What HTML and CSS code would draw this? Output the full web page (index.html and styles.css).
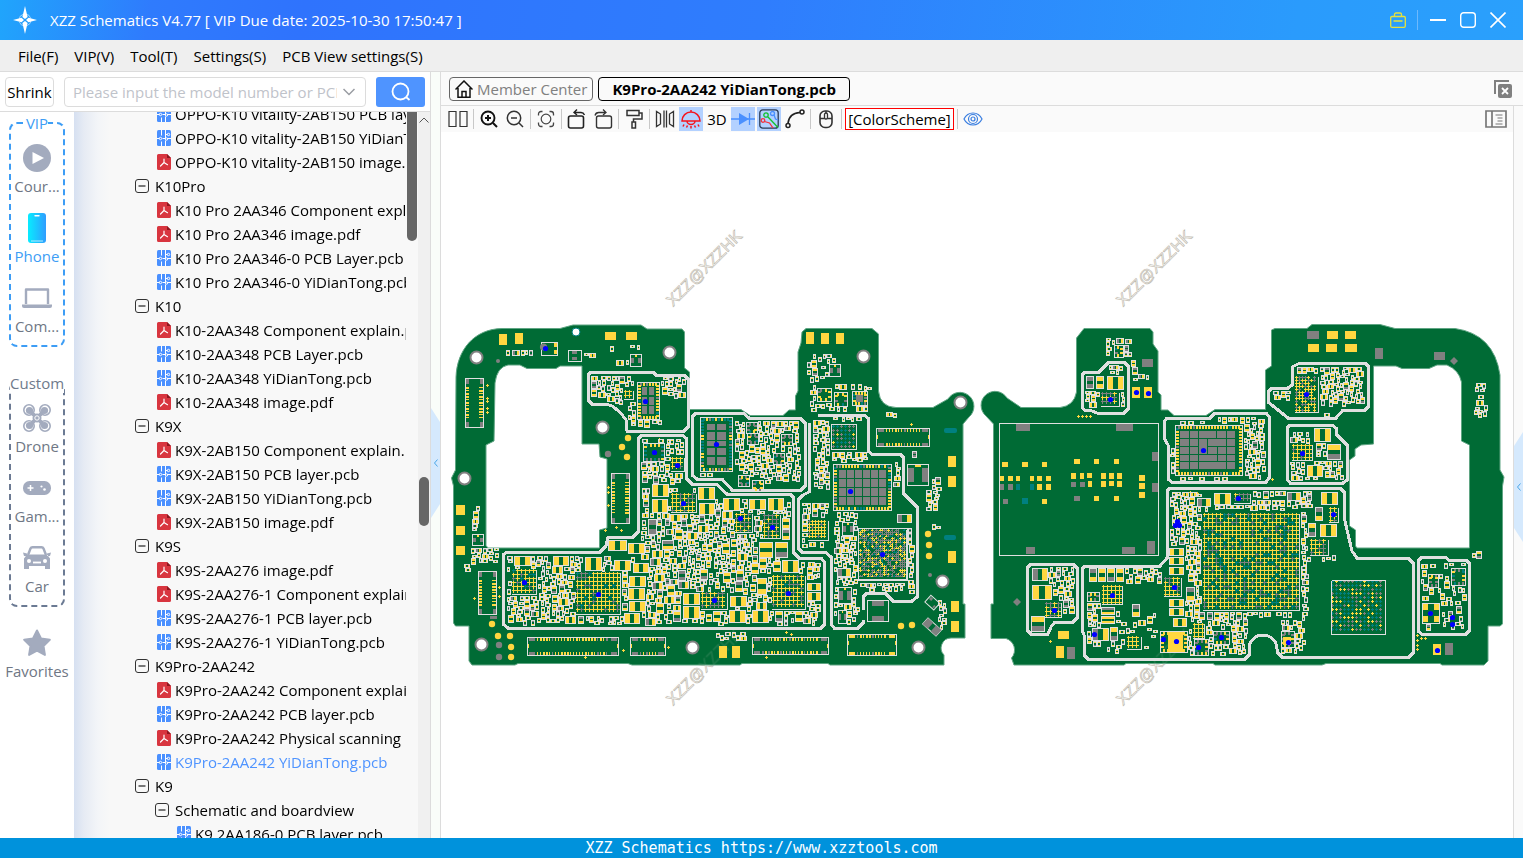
FILE: index.html
```html
<!DOCTYPE html>
<html lang="en">
<head>
    <meta charset="UTF-8">
    <meta name="viewport" content="width=device-width, initial-scale=1.0">
    <title>XZZ Schematics</title>
    <link rel="stylesheet" href="styles.css">
</head>
<body>
    <svg class="sprite" aria-hidden="true">
        <symbol id="i-pdf" viewBox="0 0 14 16">
            <path d="M1.5 0H10l4 4v10.500a1.500 1.500 0 0 1-1.500 1.500h-11A1.500 1.500 0 0 1 0 14.500v-13A1.500 1.500 0 0 1 1.500 0z" fill="#d8353f"/>
            <path d="M10 0l4 4h-4z" fill="#8d1720"/>
            <path d="M7 5v3.500M7 8.500L3.500 12M7 8.500l3.500 2.200" fill="none" stroke="#fff" stroke-width="1.200" stroke-linecap="round"/>
        </symbol>
        <symbol id="i-pcb" viewBox="0 0 14 16">
            <rect width="14" height="16" rx="1.500" fill="#4a90ff"/>
            <path d="M4.500 0v5.500M8.500 0v8M0 8.500h2.500M8.500 4.500h2M4.500 16v-4.500M8.500 16v-5.500M10.500 8.500H14M5.500 8.500h3" fill="none" stroke="#fff" stroke-width="1"/>
            <circle cx="3.500" cy="8.500" r="1.200" fill="none" stroke="#fff"/>
            <circle cx="11.500" cy="4.500" r="1.200" fill="none" stroke="#fff"/>
            <circle cx="9.500" cy="9" r="1.200" fill="none" stroke="#fff"/>
        </symbol>
        <symbol id="i-minus" viewBox="0 0 14 14">
            <rect x="0.500" y="0.500" width="13" height="13" rx="2.500" fill="none" stroke="#333"/>
            <path d="M3.500 7h7" stroke="#222" stroke-width="1.200"/>
        </symbol>
    </svg>

    <header class="titlebar">
        <svg class="logo" viewBox="0 0 24 28" aria-hidden="true">
            <circle cx="12" cy="14" r="6" fill="none" stroke="#9fd4ff" stroke-width="1" stroke-dasharray="7 2.400"/>
            <path d="M12 0l2.600 11L12 13l-2.600-2zM12 28l-2.600-11L12 15l2.600 2zM0 14l8.500-2.200L11 14l-2.500 2.200zM24 14l-8.500-2.200L13 14l2.500 2.200z" fill="#fff"/>
        </svg>
        <h1>XZZ Schematics V4.77 [ VIP Due date: 2025-10-30 17:50:47 ]</h1>
        <div class="window-buttons">
            <button class="win-btn bag" aria-label="Store">
                <svg viewBox="0 0 16 16" width="16" height="16"><path d="M2 4.500h12a1.300 1.300 0 0 1 1.300 1.300v8.200a1.300 1.300 0 0 1-1.300 1.300H2A1.300 1.300 0 0 1 0.700 14V5.800A1.300 1.300 0 0 1 2 4.500zM4.500 4V2.500A1.500 1.500 0 0 1 6 1h4a1.500 1.500 0 0 1 1.500 1.500V4M3.500 9h9" fill="none" stroke="#e6e23c" stroke-width="1.300"/></svg>
            </button>
            <button class="win-btn" aria-label="Minimize">
                <svg viewBox="0 0 16 16" width="16" height="16"><path d="M0 8h16" stroke="#fff" stroke-width="2"/></svg>
            </button>
            <button class="win-btn" aria-label="Maximize">
                <svg viewBox="0 0 16 16" width="16" height="16"><rect x="0.700" y="0.700" width="14.600" height="14.600" rx="3" fill="none" stroke="#fff" stroke-width="1.400"/></svg>
            </button>
            <button class="win-btn" aria-label="Close">
                <svg viewBox="0 0 16 16" width="16" height="16"><path d="M0.500 0.500l15 15M15.500 0.500l-15 15" stroke="#fff" stroke-width="1.600"/></svg>
            </button>
        </div>
    </header>

    <nav class="menubar">
        <a href="#">File(F)</a>
        <a href="#">VIP(V)</a>
        <a href="#">Tool(T)</a>
        <a href="#">Settings(S)</a>
        <a href="#">PCB View settings(S)</a>
    </nav>

    <main class="workspace">
        <section class="side">
            <form class="search">
                <button type="button" class="shrink">Shrink</button>
                <div class="search-box">
                    <input type="text" aria-label="Model number" placeholder="Please input the model number or PCB">
                    <svg viewBox="0 0 12 8" width="12" height="8" aria-hidden="true"><path d="M0.500 1L6 6.500 11.500 1" fill="none" stroke="#9a9da3" stroke-width="1.500"/></svg>
                </div>
                <button type="button" class="search-btn" aria-label="Search">
                    <svg viewBox="0 0 20 20" width="20" height="20"><circle cx="9.500" cy="9.500" r="8" fill="none" stroke="#fff" stroke-width="1.800"/><path d="M15 15l3.500 3" stroke="#fff" stroke-width="1.800"/></svg>
                </button>
            </form>

            <div class="side-body">
                <div class="categories">
                    <fieldset class="vip">
                        <legend>VIP</legend>
                        <button class="cat">
                            <svg viewBox="0 0 28 28" width="28" height="28"><circle cx="14" cy="14" r="14" fill="#a3abbe"/><path d="M9.500 8v12l11.500-6z" fill="#fff"/></svg>
                            <span>Cour...</span>
                        </button>
                        <button class="cat active">
                            <svg viewBox="0 0 28 30" width="28" height="30"><defs><linearGradient id="phone" x1="0" x2="1"><stop offset="0" stop-color="#08ecff"/><stop offset="1" stop-color="#2f9dff"/></linearGradient></defs><rect x="5" width="18" height="30" rx="3" fill="url(#phone)"/><path d="M12 2.800h4" stroke="#fff" stroke-width="1.400" stroke-linecap="round"/><path d="M8 28h12" stroke="#b8ecff"/></svg>
                            <span>Phone</span>
                        </button>
                        <button class="cat">
                            <svg viewBox="0 0 30 20" width="30" height="20"><path d="M4 16V1.500h22V16" fill="none" stroke="#a3abbe" stroke-width="2.400" stroke-linejoin="round"/><path d="M0 16.500h30v1.500a2 2 0 0 1-2 2H2a2 2 0 0 1-2-2z" fill="#a3abbe"/></svg>
                            <span>Com...</span>
                        </button>
                    </fieldset>
                    <fieldset class="custom">
                        <legend>Custom</legend>
                        <button class="cat">
                            <svg viewBox="0 0 28 28" width="28" height="28"><path d="M6 6l16 16M22 6L6 22" stroke="#a3abbe" stroke-width="3.600"/><g fill="#fff" stroke="#a3abbe" stroke-width="1.600"><circle cx="6" cy="6" r="5.200"/><circle cx="22" cy="6" r="5.200"/><circle cx="6" cy="22" r="5.200"/><circle cx="22" cy="22" r="5.200"/></g><g fill="#a3abbe"><circle cx="6.500" cy="6.500" r="3.600"/><circle cx="21.500" cy="6.500" r="3.600"/><circle cx="6.500" cy="21.500" r="3.600"/><circle cx="21.500" cy="21.500" r="3.600"/><circle cx="14" cy="14" r="4.500"/></g><path d="M7 7l5 5M21 7l-5 5M7 21l5-5M21 21l-5-5" stroke="#a3abbe" stroke-width="3"/><circle cx="14" cy="14" r="2.200" fill="none" stroke="#fff"/></svg>
                            <span>Drone</span>
                        </button>
                        <button class="cat">
                            <svg viewBox="0 0 28 14" width="28" height="14"><rect width="28" height="14" rx="6.500" fill="#a3abbe"/><path d="M4.500 7h6M7.500 4v6" stroke="#fff" stroke-width="1.500"/><circle cx="18.500" cy="5.500" r="1.100" fill="#fff"/><circle cx="21.500" cy="8.500" r="1.300" fill="#fff"/></svg>
                            <span>Gam...</span>
                        </button>
                        <button class="cat">
                            <svg viewBox="0 0 28 24" width="28" height="24"><path d="M5 9l2.500-6.500Q8 1.200 9.500 1.200h9q1.500 0 2 1.300L23 9" fill="none" stroke="#a3abbe" stroke-width="2.400"/><path d="M0 6.500l4 1v2.500H1zM28 6.500l-4 1v2.500h3zM4 8.500h20l3 4V23h-5v-3H6v3H1V12.500z" fill="#a3abbe"/><circle cx="6" cy="15" r="2" fill="#fff"/><circle cx="22" cy="15" r="2" fill="#fff"/><path d="M10 16.500h8" stroke="#fff" stroke-width="1.800"/></svg>
                            <span>Car</span>
                        </button>
                    </fieldset>
                    <button class="cat favorites">
                        <svg viewBox="0 0 28 28" width="28" height="28"><path d="M14 1.500l4 8 8.800 1.300-6.300 6.200 1.400 8.900-7.900-4.200-7.900 4.200L7.500 17 1.200 10.800 10 9.500z" fill="#a3abbe" stroke="#a3abbe" stroke-width="2" stroke-linejoin="round"/></svg>
                        <span>Favorites</span>
                    </button>
                </div>

                <div class="tree-wrap">
                    <ul class="tree">
                        <li><a href="#" class="file"><svg><use href="#i-pcb"/></svg>OPPO-K10 vitality-2AB150 PCB layer.pcb</a></li>
                        <li><a href="#" class="file"><svg><use href="#i-pcb"/></svg>OPPO-K10 vitality-2AB150 YiDianTong.pcb</a></li>
                        <li><a href="#" class="file"><svg><use href="#i-pdf"/></svg>OPPO-K10 vitality-2AB150 image.pdf</a></li>
                        <li><a href="#" class="group"><svg><use href="#i-minus"/></svg>K10Pro</a></li>
                        <li><a href="#" class="file"><svg><use href="#i-pdf"/></svg>K10 Pro 2AA346 Component explain.pdf</a></li>
                        <li><a href="#" class="file"><svg><use href="#i-pdf"/></svg>K10 Pro 2AA346 image.pdf</a></li>
                        <li><a href="#" class="file"><svg><use href="#i-pcb"/></svg>K10 Pro 2AA346-0 PCB Layer.pcb</a></li>
                        <li><a href="#" class="file"><svg><use href="#i-pcb"/></svg>K10 Pro 2AA346-0 YiDianTong.pcb</a></li>
                        <li><a href="#" class="group"><svg><use href="#i-minus"/></svg>K10</a></li>
                        <li><a href="#" class="file"><svg><use href="#i-pdf"/></svg>K10-2AA348 Component explain.pdf</a></li>
                        <li><a href="#" class="file"><svg><use href="#i-pcb"/></svg>K10-2AA348 PCB Layer.pcb</a></li>
                        <li><a href="#" class="file"><svg><use href="#i-pcb"/></svg>K10-2AA348 YiDianTong.pcb</a></li>
                        <li><a href="#" class="file"><svg><use href="#i-pdf"/></svg>K10-2AA348 image.pdf</a></li>
                        <li><a href="#" class="group"><svg><use href="#i-minus"/></svg>K9X</a></li>
                        <li><a href="#" class="file"><svg><use href="#i-pdf"/></svg>K9X-2AB150 Component explain.pdf</a></li>
                        <li><a href="#" class="file"><svg><use href="#i-pcb"/></svg>K9X-2AB150 PCB layer.pcb</a></li>
                        <li><a href="#" class="file"><svg><use href="#i-pcb"/></svg>K9X-2AB150 YiDianTong.pcb</a></li>
                        <li><a href="#" class="file"><svg><use href="#i-pdf"/></svg>K9X-2AB150 image.pdf</a></li>
                        <li><a href="#" class="group"><svg><use href="#i-minus"/></svg>K9S</a></li>
                        <li><a href="#" class="file"><svg><use href="#i-pdf"/></svg>K9S-2AA276 image.pdf</a></li>
                        <li><a href="#" class="file"><svg><use href="#i-pdf"/></svg>K9S-2AA276-1 Component explain.pdf</a></li>
                        <li><a href="#" class="file"><svg><use href="#i-pcb"/></svg>K9S-2AA276-1 PCB layer.pcb</a></li>
                        <li><a href="#" class="file"><svg><use href="#i-pcb"/></svg>K9S-2AA276-1 YiDianTong.pcb</a></li>
                        <li><a href="#" class="group"><svg><use href="#i-minus"/></svg>K9Pro-2AA242</a></li>
                        <li><a href="#" class="file"><svg><use href="#i-pdf"/></svg>K9Pro-2AA242 Component explain.pdf</a></li>
                        <li><a href="#" class="file"><svg><use href="#i-pcb"/></svg>K9Pro-2AA242 PCB layer.pcb</a></li>
                        <li><a href="#" class="file"><svg><use href="#i-pdf"/></svg>K9Pro-2AA242 Physical scanning image.pdf</a></li>
                        <li><a href="#" class="file current"><svg><use href="#i-pcb"/></svg>K9Pro-2AA242 YiDianTong.pcb</a></li>
                        <li><a href="#" class="group"><svg><use href="#i-minus"/></svg>K9</a></li>
                        <li><a href="#" class="group nested"><svg><use href="#i-minus"/></svg>Schematic and boardview</a></li>
                        <li><a href="#" class="file nested"><svg><use href="#i-pcb"/></svg>K9 2AA186-0 PCB layer.pcb</a></li>
                    </ul>
                    <div class="scroll-inner"><div class="thumb"></div></div>
                    <div class="scroll-outer">
                        <svg viewBox="0 0 10 6" width="10" height="6" aria-hidden="true"><path d="M0.500 5.500L5 1l4.500 4.500" fill="none" stroke="#555"/></svg>
                        <div class="thumb"></div>
                    </div>
                </div>
            </div>
        </section>

        <div class="splitter">
            <button class="handle left" aria-label="Collapse panel"><svg viewBox="0 0 4 8" width="4" height="8"><path d="M3.500 0.500L0.500 4l3 3.500" fill="none" stroke="#4aa6e8"/></svg></button>
        </div>

        <section class="viewer">
            <div class="tabs">
                <button class="tab">
                    <svg viewBox="0 0 18 18" width="18" height="18"><path d="M0.500 9.500L9 1l8.500 8.500M3 8v9.200h12V8M7 17v-5.500h4V17" fill="none" stroke="#111" stroke-width="1.500"/></svg>
                    Member Center
                </button>
                <button class="tab current">K9Pro-2AA242 YiDianTong.pcb</button>
                <button class="close-all" aria-label="Close all tabs">
                    <svg viewBox="0 0 18 18" width="18" height="18"><path d="M1 14V1h14" fill="none" stroke="#808080" stroke-width="2"/><rect x="4" y="4" width="14" height="14" rx="2" fill="#808080"/><path d="M8 8l6 6M14 8l-6 6" stroke="#fff" stroke-width="1.800"/></svg>
                </button>
            </div>

            <div class="view-row">
                <div class="view-col">
                    <div class="toolbar">
                        <button class="tool" aria-label="Split view"><svg viewBox="0 0 20 20"><path d="M1 2.500h7v15H1zM12 2.500h7v15h-7z" fill="none" stroke="#333" stroke-width="1.200"/></svg></button>
                        <i class="sep"></i>
                        <button class="tool" aria-label="Zoom in"><svg viewBox="0 0 20 20"><circle cx="9" cy="9" r="6.500" fill="none" stroke="#111" stroke-width="1.900"/><path d="M14 14l4 4M6 9h6M9 6v6" stroke="#111" stroke-width="2"/></svg></button>
                        <button class="tool" aria-label="Zoom out"><svg viewBox="0 0 20 20"><circle cx="9" cy="9" r="6.700" fill="none" stroke="#333" stroke-width="1.500"/><path d="M14 14l4 4M6 9h6" stroke="#333" stroke-width="1.500"/></svg></button>
                        <i class="sep"></i>
                        <button class="tool" aria-label="Fit"><svg viewBox="0 0 20 20"><circle cx="10" cy="10" r="4.800" fill="none" stroke="#444" stroke-width="1.200"/><path d="M2.500 6.500V5A2.500 2.500 0 0 1 5 2.500h1.500M13.500 2.500H15A2.500 2.500 0 0 1 17.500 5v1.500M17.500 13.500V15a2.500 2.500 0 0 1-2.500 2.500h-1.500M6.500 17.500H5A2.500 2.500 0 0 1 2.500 15v-1.500" fill="none" stroke="#444" stroke-width="1.300"/></svg></button>
                        <i class="sep"></i>
                        <button class="tool" aria-label="Rotate left"><svg viewBox="0 0 20 20"><rect x="1.500" y="7" width="15" height="12" rx="2" fill="none" stroke="#222" stroke-width="1.600"/><path d="M7 3.500h7a4 4 0 0 1 3.500 2.500M10 0.500l-3 3 3 2.500" fill="none" stroke="#222" stroke-width="1.400"/></svg></button>
                        <button class="tool" aria-label="Rotate right"><svg viewBox="0 0 20 20"><rect x="3.500" y="7" width="15" height="12" rx="2" fill="none" stroke="#333" stroke-width="1.400"/><path d="M13 3.500H6A4 4 0 0 0 2 6.500M10 0.500l3 3-3 2.500" fill="none" stroke="#333" stroke-width="1.300"/></svg></button>
                        <i class="sep"></i>
                        <button class="tool" aria-label="Paint"><svg viewBox="0 0 20 20"><path d="M3 1.500h12v5H3zM15 4h3v6H9.500v3M8 13h3.500v6H8z" fill="none" stroke="#333" stroke-width="1.500"/></svg></button>
                        <i class="sep"></i>
                        <button class="tool" aria-label="Mirror"><svg viewBox="0 0 20 20"><path d="M1.500 2.500v15l4-2.500V5zM18.500 2.500v15l-4-2.500V5zM9 1.500v17M11.500 1.500v17" fill="none" stroke="#333" stroke-width="1.300"/></svg></button>
                        <button class="tool on" aria-label="Light"><svg viewBox="0 0 20 20"><path d="M10 1v2M1 12c0-5 4-9 9-9s9 4 9 9zM6 12c0 2 2 3.500 4 3.500s4-1.500 4-3.500M3 15.500l-1 2M6.500 16.500l-1 2M10 17v2.500M13.500 16.500l1 2M17 15.500l1 2" fill="none" stroke="#f5141e" stroke-width="1.500"/></svg></button>
                        <button class="tool text">3D</button>
                        <button class="tool on" aria-label="Diode"><svg viewBox="0 0 24 20" class="wide"><path d="M0 10h24M18.500 4v12" stroke="#4a90ff" stroke-width="1.300"/><path d="M8 4v12l10-6z" fill="#4a90ff"/></svg></button>
                        <button class="tool on" aria-label="Nets"><svg viewBox="0 0 20 20"><rect x="0.800" y="0.800" width="18.400" height="18.400" rx="3" fill="none" stroke="#2a3a55" stroke-width="1.300"/><path d="M15 6l1.500 4 2.500 1" stroke="#4a90ff" stroke-width="1.300" fill="none"/><circle cx="13.500" cy="4.500" r="2" fill="none" stroke="#4a90ff" stroke-width="1.300"/><circle cx="7" cy="6" r="2.200" fill="none" stroke="#13c22c" stroke-width="1.300"/><path d="M9 8l10 10.500" stroke="#13c22c" stroke-width="1.300"/><circle cx="4" cy="11.500" r="1.800" fill="none" stroke="#f5323c" stroke-width="1.300"/><path d="M5.500 12.500l5 1.500 3.500 5" fill="none" stroke="#f5323c" stroke-width="1.300"/></svg></button>
                        <button class="tool" aria-label="Jumper"><svg viewBox="0 0 20 20"><circle cx="3" cy="16.500" r="2" fill="none" stroke="#222" stroke-width="1.500"/><circle cx="17" cy="3" r="2" fill="none" stroke="#222" stroke-width="1.500"/><path d="M3 14.500C3.500 8 8 4 15 3.500" fill="none" stroke="#222" stroke-width="1.600"/></svg></button>
                        <i class="sep"></i>
                        <button class="tool" aria-label="Mouse"><svg viewBox="0 0 20 20"><rect x="4" y="2" width="12" height="16.500" rx="5" fill="none" stroke="#333" stroke-width="1.600"/><path d="M4 9.500h12M10 2v2.500" stroke="#333" stroke-width="1.400"/><rect x="8.500" y="4" width="3" height="6" rx="1.500" fill="#fafafa" stroke="#333" stroke-width="1.300"/></svg></button>
                        <i class="sep"></i>
                        <button class="scheme">[ColorScheme]</button>
                        <i class="sep"></i>
                        <button class="tool" aria-label="Show"><svg viewBox="0 0 20 20"><path d="M1 10c2-4 5.500-6 9-6s7 2 9 6c-2 4-5.500 6-9 6s-7-2-9-6z" fill="none" stroke="#3b7fe0" stroke-width="1.200"/><circle cx="10" cy="10" r="4.500" fill="none" stroke="#3b7fe0" stroke-width="1.200"/><circle cx="10" cy="10" r="2" fill="none" stroke="#3b7fe0" stroke-width="1.200"/></svg></button>
                        <button class="tool side-toggle" aria-label="Side list"><svg viewBox="0 0 22 18"><path d="M1 1h20v16H1zM7 1v16" fill="none" stroke="#777" stroke-width="1.700"/><path d="M10.500 5h7M12.500 8h5M12.500 11h5M10.500 14h7" stroke="#777" stroke-width="1.200"/></svg></button>
                    </div>
                    <div class="canvas">
                        <svg id="board" viewBox="441 132 1072 706" role="img" aria-label="Board view"></svg>
                    </div>
                </div>
                <div class="rail">
                    <button class="handle right" aria-label="Expand panel"><svg viewBox="0 0 4 8" width="4" height="8"><path d="M3.500 0.500L0.500 4l3 3.500" fill="none" stroke="#4aa6e8"/></svg></button>
                </div>
            </div>
        </section>
    </main>

    <footer class="statusbar">XZZ Schematics https://www.xzztools.com</footer>

    <script src="board.js"></script>
</body>
</html>
```
FILE: styles.css
```css
* {
    box-sizing: border-box;
}

body {
    margin: 0;
    height: 100vh;
    display: flex;
    flex-direction: column;
    overflow: hidden;
    font-family: 'Open Sans', 'Noto Sans', sans-serif;
    font-size: 15px;
    color: #000;
    background-color: #fff;
}

button {
    margin: 0;
    padding: 0;
    border: none;
    background: none;
    font: inherit;
    color: inherit;
}

a {
    color: inherit;
    text-decoration: none;
}

.sprite {
    position: absolute;
    width: 0;
    height: 0;
}

/* title bar */
.titlebar {
    display: flex;
    align-items: center;
    flex: none;
    height: 40px;
    padding: 0 17px 0 13px;
    background: linear-gradient(100deg, #20a5fc 0, #2f7bfd 150px, #2f73fd 300px, #2f7dfd 50%, #2a9bfc 85%, #2aa0fc 100%);
    color: #fff;
}

.logo {
    width: 24px;
    height: 28px;
    margin-right: 13px;
}

h1 {
    margin: 0;
    font-size: 15px;
    font-weight: normal;
}

.window-buttons {
    display: flex;
    align-items: center;
    gap: 14px;
    margin-left: auto;
}

.win-btn {
    display: flex;
}

.bag {
    padding: 2px 11px 2px 0;
    border-right: 1px solid #6db9fd;
    margin-right: -2px;
}

/* menu */
.menubar {
    display: flex;
    align-items: center;
    flex: none;
    gap: 16px;
    height: 32px;
    padding: 0 18px;
    background-color: #efefef;
    border-bottom: 1px solid #dcdcdc;
}

.workspace {
    display: flex;
    flex: 1;
    min-height: 0;
}

/* left side */
.side {
    display: flex;
    flex-direction: column;
    width: 431px;
    flex: none;
    border-right: 1px solid #dcdcdc;
}

.search {
    display: flex;
    align-items: center;
    flex: none;
    height: 40px;
    padding: 0 5px;
    border-bottom: 1px solid #dcdcdc;
}

.shrink {
    width: 49px;
    height: 30px;
    border: 1px solid #dcdcdc;
    border-radius: 4px;
}

.search-box {
    display: flex;
    align-items: center;
    flex: 1;
    height: 30px;
    margin: 0 10px;
    padding: 0 10px 0 8px;
    border: 1px solid #dcdcdc;
    border-radius: 4px;
}

.search-box input {
    flex: 1;
    min-width: 0;
    margin-right: 6px;
    padding: 0;
    border: none;
    outline: none;
    font: inherit;
    background: none;
}

.search-box input::placeholder {
    color: #bfc3ca;
}

.search-btn {
    display: flex;
    align-items: center;
    justify-content: center;
    width: 49px;
    height: 30px;
    border-radius: 3px;
    background-color: #4f94ff;
}

.side-body {
    display: flex;
    flex: 1;
    min-height: 0;
}

.categories {
    width: 74px;
    flex: none;
    padding-top: 1px;
}

fieldset {
    width: 56px;
    min-width: 0;
    margin: 0 9px;
    padding: 0 0 2px;
    border: 2px dashed #3d9df5;
    border-radius: 8px;
}

fieldset.custom {
    margin-top: 26px;
    border-color: #6b7a93;
}

legend {
    margin: 0 auto;
    padding: 0;
    line-height: 20px;
    color: #3d9df5;
}

.custom legend {
    margin: 0 -1px;
    color: #6f7a8c;
}

.cat {
    display: flex;
    flex-direction: column;
    align-items: center;
    width: 100%;
    height: 70px;
    padding: 7px 0;
    color: #6f7785;
}

.cat svg {
    margin: auto 0;
}

.cat span {
    line-height: 20px;
}

.cat.active {
    color: #3d9df5;
}

.favorites {
    margin-top: 11px;
}

/* file tree */
.tree-wrap {
    display: flex;
    flex: 1;
    min-width: 0;
    background: linear-gradient(90deg, #d6e0f1 0, #e6ebf4 10px, #f3f5f8 24px, #f8f8f8 36px);
}

.tree {
    flex: 1;
    min-width: 0;
    margin: -10px 0 0;
    padding: 0;
    list-style: none;
    overflow: hidden;
    clip-path: inset(10px 0 0 0);
}

.tree a {
    display: flex;
    align-items: center;
    height: 24px;
    white-space: nowrap;
}

.tree svg {
    flex: none;
    width: 14px;
    height: 16px;
    margin-right: 4px;
}

.group {
    padding-left: 61px;
}

.tree .group svg {
    height: 14px;
    margin-right: 6px;
}

.file {
    padding-left: 83px;
}

.group.nested {
    padding-left: 81px;
}

.file.nested {
    padding-left: 103px;
}

.file.current {
    color: #4f94ff;
}

.scroll-inner {
    width: 12px;
    flex: none;
    padding: 0 1px;
}

.scroll-inner .thumb {
    height: 129px;
    border-radius: 0 0 5px 5px;
    background-color: #666;
}

.scroll-outer {
    width: 12px;
    flex: none;
    padding: 5px 1px;
    background-color: #f0f0f0;
}

.scroll-outer svg {
    display: block;
}

.scroll-outer .thumb {
    height: 49px;
    margin-top: 354px;
    border-radius: 5px;
    background-color: #666;
}

.splitter {
    display: flex;
    align-items: center;
    width: 10px;
    flex: none;
    background-color: #f9fdf9;
    border-right: 1px solid #dcdcdc;
}

.handle {
    display: flex;
    align-items: center;
    justify-content: center;
    width: 100%;
    height: 110px;
    background-color: #d5e9fd;
}

.handle.left {
    margin-top: 16px;
    clip-path: polygon(0 0, 100% 14px, 100% 96px, 0 100%);
}

.handle.right {
    margin-top: 30px;
    clip-path: polygon(0 14px, 100% 0, 100% 100%, 0 96px);
}

/* viewer */
.viewer {
    display: flex;
    flex-direction: column;
    flex: 1;
    min-width: 0;
}

.tabs {
    display: flex;
    align-items: center;
    flex: none;
    gap: 5px;
    height: 34px;
    padding: 0 11px 0 8px;
    background-color: #fafafa;
    border-bottom: 1px solid #dcdcdc;
}

.tab {
    display: flex;
    align-items: center;
    gap: 4px;
    height: 24px;
    padding: 0 5px;
    border: 1px solid #666;
    border-radius: 4px;
    color: #808080;
    white-space: nowrap;
}

.tab.current {
    padding: 0 13px;
    border-color: #000;
    color: #000;
    font-weight: bold;
}

.close-all {
    display: flex;
    margin-left: auto;
}

.view-row {
    display: flex;
    flex: 1;
    min-height: 0;
}

.view-col {
    display: flex;
    flex-direction: column;
    flex: 1;
    min-width: 0;
}

.toolbar {
    display: flex;
    align-items: center;
    flex: none;
    gap: 2px;
    height: 26px;
    padding: 0 5px;
    background-color: #fafafa;
}

.tool {
    display: flex;
    align-items: center;
    justify-content: center;
    width: 24px;
    height: 24px;
    flex: none;
}

.tool svg {
    width: 20px;
    height: 20px;
}

.tool svg.wide {
    width: 24px;
}

.tool.on {
    background-color: #b3d1ff;
}

.side-toggle {
    margin-left: auto;
}

.side-toggle svg {
    width: 22px;
}

.sep {
    width: 1px;
    height: 20px;
    margin: 0 1px;
    background-color: #c8c8c8;
}

.scheme {
    width: 109px;
    height: 22px;
    border: 1px solid #f00;
    background-color: #fff;
    line-height: 20px;
}

.canvas {
    flex: 1;
    min-height: 0;
}

.canvas svg {
    display: block;
    width: 100%;
    height: 100%;
}

.rail {
    display: flex;
    align-items: center;
    width: 10px;
    flex: none;
    background-color: #fafafa;
    border-left: 1px solid #dcdcdc;
}

.board-fill {
    fill: #006b35;
    fill-rule: evenodd;
    stroke: #5fa583;
    stroke-width: 1;
}

.trace {
    fill: none;
    stroke: #e0e0e0;
    stroke-width: 3;
}

.silk {
    fill: none;
    stroke: #e0e0e0;
    stroke-width: 1;
}

.crisp {
    shape-rendering: crispEdges;
}

.mark {
    font-family: 'Liberation Sans', Arial, sans-serif;
    font-size: 16px;
    text-anchor: middle;
    fill: #fff;
    stroke: #bdb7ab;
    stroke-width: 0.6px;
}

/* status bar */
.statusbar {
    flex: none;
    height: 20px;
    background-color: #0092dc;
    color: #fff;
    font-family: 'DejaVu Sans Mono', monospace;
    font-size: 15px;
    line-height: 20px;
    text-align: center;
}
```
FILE: board.js
```js
const board = document.getElementById('board');
const Y = '#ffd740', G = '#808080', T = '#008080', B = '#0000ff';

// Seeded random so that the small parts stay in place on every load
let seed = 4242;
function rnd() {
    seed = (seed * 1664525 + 1013904223) % 4294967296;
    return seed / 4294967296;
}

const fills = { [Y]: '', [G]: '', [T]: '' };
let silk = '';
let extra = '';
const used = new Uint8Array(1100 * 400);

function at(x, y) {
    return (y - 310) * 1100 + (x - 440);
}

function take(x, y, w, h) {
    for (let j = y; j < y + h; j++) {
        for (let i = x; i < x + w; i++) used[at(i, j)] = 1;
    }
}

function free(x, y, w, h) {
    for (let j = y; j < y + h; j++) {
        for (let i = x; i < x + w; i++) if (used[at(i, j)]) return false;
    }
    return true;
}

function pad(c, x, y, w, h) {
    fills[c] += `M${x} ${y}h${w}v${h}h${-w}z`;
}

function box(x, y, w, h) {
    silk += `M${x + 0.5} ${y + 0.5}h${w - 1}v${h - 1}h${1 - w}z`;
    take(x, y, w, h);
}

function pick(mix) {
    const r = rnd();
    if (r < mix[0]) return Y;
    if (r < mix[0] + mix[1]) return G;
    return r < mix[0] + mix[1] + mix[2] ? T : null;
}

function plus(c, x, y) {
    pad(c, x - 1, y, 3, 1);
    pad(c, x, y - 1, 1, 3);
}

// Ball grid: mesh of small crosses
function bga(x, y, w, h, mix, pitch = 4, arm = 4) {
    for (let j = y + 1; j < y + h - 1; j += pitch) {
        for (let i = x + 1; i < x + w - 1; i += pitch) {
            const c = pick(mix);
            if (!c) continue;
            pad(c, i - 1, j, arm, 1);
            pad(c, i, j - 1, 1, arm);
        }
    }
    silk += `M${x} ${y + h + 0.5}h${w + 0.5}v${-h}`;
    take(x, y, w + 2, h + 2);
}

// Two-terminal part
function cap(x, y, w, h, c = Y, vertical = false) {
    box(x, y, w, h);
    if (vertical) {
        const p = Math.max(1, Math.round((h - 2) / 3));
        pad(c, x + 1, y + 1, w - 2, p);
        pad(rnd() < 0.25 ? G : Y, x + 1, y + h - 1 - p, w - 2, p);
    } else {
        const p = Math.max(1, Math.round((w - 2) / 3));
        pad(c, x + 1, y + 1, p, h - 2);
        pad(Y, x + w - 1 - p, y + 1, p, h - 2);
    }
}

// Chip with pads along its edges
function ring(x, y, w, h, mix, step = 3) {
    box(x, y, w, h);
    for (let i = x + 3; i < x + w - 3; i += step) {
        pad(pick(mix) || Y, i, y + 1, 2, 3);
        pad(pick(mix) || Y, i, y + h - 4, 2, 3);
    }
    for (let j = y + 3; j < y + h - 3; j += step) {
        pad(pick(mix) || Y, x + 1, j, 3, 2);
        pad(pick(mix) || Y, x + w - 4, j, 3, 2);
    }
}

function connV(x, y, w, h) {
    box(x, y, w, h);
    for (let j = y + 9; j < y + h - 9; j += 3) {
        pad(Y, x + 1, j, 3, rnd() < 0.5 ? 1 : 2);
        pad(Y, x + w - 5, j, 4, rnd() < 0.5 ? 1 : 2);
    }
    pad(G, x + 1, y + 1, 3, 5);
    pad(G, x + w - 4, y + 1, 3, 5);
    pad(G, x + 1, y + h - 6, 3, 5);
    pad(G, x + w - 4, y + h - 6, 3, 5);
}

function connH(x, y, w, h, c = Y) {
    box(x, y, w, h);
    for (let i = x + 10; i < x + w - 10; i += 3) {
        const cc = rnd() < 0.15 ? G : Y;
        pad(cc, i, y + 1, rnd() < 0.6 ? 1 : 2, 3);
        pad(cc, i, y + h - 4, rnd() < 0.6 ? 1 : 2, 3);
    }
    for (const px of [x + 2, x + w - 8]) {
        pad(c, px, y + 1, 6, 3);
        pad(c, px, y + h - 4, 6, 3);
    }
    pad(Y, x + 1, y + 7, 1, 4);
    pad(Y, x + w - 2, y + 7, 1, 4);
}

function dot(x, y, c = B, r = 2.6) {
    extra += `<circle cx="${x}" cy="${y}" r="${r}" fill="${c}"/>`;
}

function hole(x, y) {
    extra += `<circle cx="${x}" cy="${y}" r="6" fill="#fff" stroke="${G}" stroke-width="2"/>`;
}

const sizes = [[4, 6], [6, 4], [4, 5], [5, 7], [7, 5], [6, 8], [8, 6], [4, 6], [6, 4], [3, 5], [5, 3]];

// Pack a region with small parts
function pack(x, y, w, h, p = 0.9, big = 0) {
    for (let j = y; j < y + h - 3; j++) {
        for (let i = x; i < x + w - 3; i++) {
            if (used[at(i, j)] || rnd() > p * 0.5) continue;
            let s = sizes[Math.floor(rnd() * sizes.length)];
            if (rnd() < big) s = rnd() < 0.5 ? [8, 11] : [11, 8];
            if (i + s[0] > x + w || j + s[1] > y + h || !free(i, j, s[0], s[1])) continue;
            cap(i, j, s[0], s[1], rnd() < 0.22 ? G : Y, s[1] > s[0]);
        }
    }
}

const outline = `M456 377C457 350 474 329 502 328.500H560L573 325H641L647 329H682L684.500 332V368L689.500 372V409.500H741L750 415.500H783L789 410H795.500V396L798 391V352L801 343 802 332 806 328.500H872L878.500 334V391Q880 407 896 407.500H933L948 399A14 14 0 1 1 969 417L963 424V604H965V638H951A10 10 0 0 0 944 655V665H830L828 663.500H742L740 665H632L628 663.500H518L515 665H472L469 661V626H455.500L453.500 623V486L451.500 478 455.500 470z
M495 383Q497 367 508 365H520L527 368.500H556L560 366H582V444H599L600 457 607 459V528L599.500 530V548H488L486 545.500V445L494 441z
M1014 665L1011.500 658A12 12 0 0 0 1006 638.500H991V604H993.500V424L986 416A14 14 0 1 1 1007 398L1021 407.500H1060Q1074 406 1076.500 392V338L1084 328.500H1150L1153 332V344L1158 351V392L1161 395V410H1168L1174 415.500H1206L1215 409.500H1265.500V370L1271.500 366V330L1275 328.500H1307L1312 324.500H1380L1395 328.500H1455Q1494 334 1500 375V470L1504 477 1502.500 486V624L1500 626H1488V661L1484 665H1442L1440 663.500H1326L1322 665H1215L1213 663.500H1126L1124 665z
M1373.500 366H1396L1402 368.500H1429L1437 365H1447Q1459 370 1461.500 382V441L1469.500 445V548H1357L1355.500 546V530L1349.500 526V460L1355 456V449L1361 445 1373.500 444z`;

const traces = [
    '588 375 591 372 653 372 656 375 684 375 688 379 688 427 684 431 627 431 626 420 620 412 612 406 606 404 592 404 588 400z',
    '638 439 642 435 682 435 686 438 686 478 692 484 716 484 727 494 790 494 793 497 793 552 799 558 821 558 824 562 824 625 821 628 508 628 503 624 503 555 507 552 600 552 606 546 608 537 633 537 638 532z',
    '692 417 696 413 743 413 749 418 800 418 805 423 805 486 801 490 732 490 722 479 697 479 692 475z',
    '809 423 809 492 803 495 798 500 798 548 802 552 825 552 831 557 831 624 834 628 858 628 863 623 863 620',
    '863 610 863 597 867 593 885 593 893 601 912 601 917 597 917 507 903 493 903 457 900 454 872 454 868 451 868 418 864 415 818 415',
    '1082 375 1085 372 1099 372 1109 362 1124 362 1128 366 1128 409 1124 413 1097 413 1092 411 1084 410 1082 407z',
    '1164 422 1167 418 1210 418 1215 413 1266 413 1269 417 1269 478 1266 482 1172 482 1168 479 1168 445 1164 438z',
    '1268 392 1272 388 1288 388 1292 385 1292 367 1300 363 1365 363 1368 366 1368 407 1365 410 1343 410 1336 418 1288 418 1268 402z',
    '1287 428 1290 425 1332 425 1336 428 1336 434 1347 445 1347 480 1343 483 1290 483 1287 479z',
    '1027 568 1031 564 1073 564 1077 568 1077 618 1073 622 1055 622 1051 627 1048 634 1031 634 1027 630z',
    '1418 561 1422 557 1445 557 1449 560 1466 560 1469 563 1469 631 1466 634 1422 634 1418 631z'
];
const bigTrace = 'M1167 491L1170 488H1340L1344 492V517L1352 551 1357 558H1408L1413 563V653L1409 657H1282L1277 652V649A14 14 0 0 0 1249 649V655L1245 659H1088L1084 655V635L1082 630V569L1085 566H1160L1167 558z';

/* bare pads */
[[499, 334, 8, 11], [515, 333, 8, 11], [605, 332, 11, 8], [626, 332, 11, 8], [806, 332, 8, 12], [821, 333, 8, 11],
 [836, 333, 8, 11], [456, 505, 9, 10], [456, 526, 9, 9], [456, 546, 9, 9], [948, 456, 8, 11], [948, 476, 8, 11],
 [948, 551, 8, 12], [951, 601, 8, 11], [951, 621, 8, 11], [719, 646, 8, 12], [732, 646, 8, 12],
 [1132, 387, 8, 11], [1144, 387, 8, 11], [1058, 631, 11, 8], [1056, 646, 8, 12], [1327, 331, 11, 8],
 [1345, 331, 11, 8], [1308, 344, 11, 8], [1326, 344, 11, 8], [1345, 344, 12, 8], [1433, 644, 8, 11],
 [1002, 462, 6, 5], [1022, 462, 6, 5], [1042, 462, 5, 5], [1074, 459, 6, 5], [1094, 459, 5, 5], [1114, 459, 5, 5],
 [999, 476, 5, 5], [1008, 476, 5, 5], [1016, 476, 4, 5], [1030, 476, 4, 5], [1037, 476, 5, 5], [1046, 476, 5, 5],
 [1071, 473, 5, 6], [1080, 473, 4, 6], [1087, 473, 5, 5], [1101, 473, 5, 6], [1109, 473, 5, 6], [1117, 473, 5, 6],
 [1037, 484, 5, 6], [1046, 484, 5, 6], [1088, 481, 4, 6], [1101, 481, 5, 6], [1109, 481, 5, 5], [1117, 481, 5, 6],
 [1042, 499, 5, 5], [1094, 496, 5, 5], [1114, 496, 5, 5], [1139, 475, 6, 6], [1139, 483, 6, 6], [1139, 492, 6, 6]
].forEach(p => pad(Y, ...p));

[[1016, 423, 14, 8], [1116, 423, 17, 8], [1152, 452, 6, 9], [1152, 483, 6, 9], [1026, 547, 9, 7], [1122, 547, 13, 7],
 [1147, 541, 8, 13], [999, 484, 5, 6], [1008, 484, 5, 6], [1071, 482, 5, 5], [1080, 482, 5, 5], [1003, 499, 5, 5],
 [1074, 496, 6, 5], [1142, 359, 11, 8], [1067, 647, 8, 12], [1307, 331, 12, 8], [1375, 348, 8, 11],
 [1434, 352, 11, 8], [1445, 643, 8, 12], [490, 616, 7, 3]
].forEach(p => pad(G, ...p));

[[1016, 484, 4, 6], [1030, 484, 4, 6], [1022, 498, 6, 6]].forEach(p => pad(T, ...p));

silk += 'M999.500 423.500h159v132h-159z';

/* connectors */
connV(465, 378, 19, 50);
connV(611, 473, 19, 51);
connV(478, 571, 19, 44);
connH(527, 637, 92, 19, G);
connH(630, 637, 36, 19, G);
connH(752, 637, 77, 18, G);
connH(847, 634, 50, 22);
connH(876, 428, 54, 19, G);

/* chips, left board */
const gy = [0.65, 0.2, 0.15];
ring(637, 382, 23, 38, gy);
[387, 397, 406].forEach(y => { pad(G, 642, y, 5, 8); pad(G, 649, y, 5, 8); });
ring(700, 417, 33, 55, [0.4, 0.15, 0.45]);
[[424, 6], [432, 8], [441, 5], [448, 7], [457, 8]].forEach(r => { pad(G, 707, r[0], 8, r[1]); pad(G, 717, r[0], 9, r[1]); });
ring(643, 443, 22, 19, [0.6, 0.2, 0.2], 4);
ring(833, 464, 59, 47, [0.65, 0.15, 0.2]);
for (let r = 0; r < 4; r++) for (let c = 0; c < 6; c++) pad(G, 839 + c * 8, 470 + r * 9, 7, 8);
ring(852, 391, 16, 15, gy);
pad(G, 856, 394, 7, 8);
box(831, 424, 26, 26);
bga(832, 425, 24, 24, [0.2, 0.3, 0.5], 4, 3);
box(858, 528, 50, 53);
bga(859, 529, 47, 50, [0.1, 0.45, 0.1], 2, 2);
bga(859, 529, 47, 50, [0.3, 0.2, 0.1], 4, 3);
bga(576, 572, 44, 42, [0.8, 0.12, 0.08]);
bga(512, 569, 24, 25, [0.65, 0.2, 0.15]);
bga(701, 592, 26, 17, [0.7, 0.3, 0]);
bga(772, 575, 33, 34, [0.75, 0.2, 0.05]);
bga(735, 513, 17, 19, [0.6, 0.4, 0]);
bga(763, 514, 17, 24, [0.6, 0.4, 0]);
bga(671, 493, 25, 19, [0.8, 0.2, 0]);
bga(808, 520, 20, 20, [0.7, 0.3, 0], 3, 3);
bga(671, 457, 13, 14, [0.9, 0.1, 0]);
bga(624, 390, 9, 9, [0.9, 0.1, 0]);

box(541, 342, 17, 14);
pad(Y, 554, 343, 3, 4);
pad(Y, 554, 350, 3, 4);
box(568, 350, 14, 12);
pad(G, 572, 351, 5, 3);
pad(G, 572, 357, 5, 3);
[[630, 354, 12, 13], [829, 364, 12, 13], [907, 464, 22, 22], [838, 587, 14, 17], [842, 522, 12, 14], [838, 610, 9, 14], [472, 534, 12, 12]].forEach(b => {
    box(...b);
    const q = Math.round(b[2] / 4);
    pad(G, b[0] + 1, b[1] + 4, q, b[3] - 8);
    pad(G, b[0] + b[2] - 1 - q, b[1] + 4, q, b[3] - 8);
    pad(Y, b[0] + q + 2, b[1] + 1, b[2] - 2 * q - 4, 2);
});
box(867, 600, 22, 22);
pad(G, 872, 601, 12, 5);
pad(G, 872, 616, 12, 5);
[[817, 388, 15, 14], [834, 392, 14, 15]].forEach(b => ring(...b, gy, 5));
[[746, 422], [747, 433], [781, 434], [773, 453], [752, 480], [738, 475]].forEach(b => ring(b[0], b[1], 12, 12, [0.2, 0.6, 0.1], 4));

/* inductors and big capacitors */
[[652, 484, 17, 13], [652, 499, 16, 14], [698, 487, 17, 13], [699, 503, 16, 12], [608, 540, 19, 11], [628, 543, 17, 11],
 [514, 556, 17, 10], [553, 556, 16, 10], [585, 557, 17, 14], [614, 560, 17, 11], [633, 563, 16, 10], [629, 576, 17, 11],
 [628, 588, 17, 12], [629, 601, 17, 11], [624, 613, 16, 11], [683, 593, 17, 12], [683, 606, 17, 13], [723, 498, 17, 13],
 [749, 499, 17, 11], [768, 498, 16, 13], [782, 560, 17, 13], [730, 596, 17, 11], [729, 610, 17, 13], [752, 610, 17, 13],
 [807, 583, 14, 8], [807, 592, 14, 9], [1107, 376, 17, 14], [1032, 585, 20, 15], [1214, 493, 17, 12], [1321, 492, 17, 13],
 [1320, 524, 17, 13], [1314, 428, 17, 14], [1307, 465, 16, 12]
].forEach(c => cap(...c));
[[837, 568, 14, 9], [897, 514, 15, 9], [1197, 498, 14, 9], [1287, 492, 14, 9], [1032, 568, 16, 13], [1092, 628, 17, 13]].forEach(c => cap(...c, G));
[[759, 542, 14, 16], [775, 542, 13, 16], [757, 578, 10, 17], [1086, 376, 8, 13], [1096, 376, 8, 13], [1031, 616, 14, 16],
 [1089, 568, 8, 14], [1098, 568, 8, 14], [1107, 568, 8, 14], [1116, 568, 8, 14], [1110, 627, 8, 14], [1132, 604, 8, 13],
 [1101, 607, 14, 8], [1101, 616, 14, 8], [1186, 587, 9, 14], [1315, 507, 8, 14], [1308, 523, 8, 14], [1327, 444, 14, 16],
 [648, 519, 9, 16], [662, 540, 12, 10]
].forEach(c => cap(...c, rnd() < 0.4 ? G : Y, true));
[[1169, 548, 15, 8], [1169, 557, 15, 8], [1169, 567, 15, 8], [1169, 599, 15, 8], [1169, 608, 15, 8], [1173, 618, 14, 9]].forEach(c => cap(...c));

/* chips, right board */
ring(1175, 425, 68, 51, [0.75, 0.15, 0.1]);
[[1180, 431, 9, 7], [1190, 431, 8, 7], [1199, 431, 17, 7], [1217, 431, 9, 7], [1227, 431, 8, 7],
 [1180, 439, 9, 7], [1190, 439, 8, 7], [1199, 439, 8, 15], [1208, 439, 18, 7], [1227, 439, 8, 7],
 [1180, 447, 9, 7], [1190, 447, 8, 7], [1208, 447, 9, 7], [1218, 447, 8, 7], [1227, 447, 8, 7],
 [1180, 455, 9, 6], [1190, 455, 8, 6], [1199, 455, 18, 6], [1218, 455, 8, 6], [1227, 455, 8, 6],
 [1180, 462, 9, 7], [1190, 462, 8, 7], [1199, 462, 27, 7], [1227, 462, 8, 7]].forEach(p => pad(G, ...p));
bga(1203, 513, 96, 97, [0.72, 0.18, 0.1]);
bga(1331, 580, 54, 54, [0.25, 0.35, 0.4], 4, 3);
silk += 'M1331.500 580.500v54M1331.500 580.500h54';
bga(1295, 376, 23, 36, [0.6, 0.3, 0], 3, 3);
bga(1292, 444, 20, 16, [0.8, 0.2, 0]);
bga(1101, 392, 18, 14, [0.7, 0.3, 0]);
bga(1045, 602, 16, 15, [0.6, 0.4, 0]);
bga(1102, 585, 20, 19, [1, 0, 0]);
bga(1164, 577, 17, 19, [0.8, 0.2, 0]);
bga(1193, 623, 11, 15, [1, 0, 0]);
bga(1127, 636, 14, 13, [0.9, 0.1, 0]);
bga(1234, 493, 16, 10, [0.5, 0.5, 0]);
bga(1329, 507, 9, 15, [0.8, 0.2, 0]);
bga(1310, 539, 18, 16, [0.6, 0.4, 0]);
ring(1160, 631, 28, 22, [1, 0, 0], 4);
pad(Y, 1168, 632, 15, 20);
[[1194, 639, 15, 17], [1213, 631, 17, 14], [1451, 568, 15, 18], [1428, 574, 11, 14], [1281, 631, 14, 17], [1114, 345, 10, 13], [1087, 592, 13, 10]].forEach(b => ring(...b, [0.4, 0.5, 0.1], 4));
pad(Y, 1283, 637, 8, 8);
box(1422, 603, 18, 21);
[[1423, 604], [1434, 604], [1423, 616], [1434, 616]].forEach(p => pad(Y, p[0], p[1], 5, 6));

/* parts packed between the traces */
[[506, 350, 27, 7], [583, 353, 15, 8], [609, 345, 5, 8], [627, 345, 14, 6], [614, 360, 16, 7],
 [591, 376, 45, 26], [614, 392, 22, 14], [628, 402, 8, 26], [661, 377, 25, 22], [637, 420, 28, 8], [661, 412, 4, 8], [673, 411, 4, 7],
 [641, 439, 43, 48], [690, 487, 22, 12], [735, 421, 66, 64], [698, 473, 22, 5],
 [813, 420, 17, 72], [832, 417, 30, 6], [832, 452, 36, 11], [893, 462, 8, 26], [802, 503, 27, 46],
 [834, 512, 24, 113], [908, 528, 7, 68], [859, 583, 47, 9], [849, 606, 12, 15],
 [885, 412, 16, 8], [914, 415, 8, 5], [911, 451, 9, 8], [932, 477, 10, 22], [926, 490, 14, 24], [932, 524, 9, 8], [938, 600, 9, 34],
 [716, 632, 31, 9], [472, 506, 8, 26], [471, 548, 29, 20], [463, 564, 8, 8],
 [1106, 338, 26, 20], [1131, 360, 7, 22], [1131, 374, 20, 8], [1108, 365, 17, 10], [1085, 391, 15, 18], [1121, 391, 5, 17],
 [1170, 447, 5, 30], [1170, 421, 40, 4], [1215, 417, 50, 7], [1244, 421, 22, 59], [1177, 477, 65, 4],
 [1273, 391, 18, 12], [1319, 367, 46, 40], [1296, 367, 22, 8], [1297, 413, 36, 4], [1290, 432, 22, 12], [1290, 461, 54, 20], [1313, 443, 14, 18],
 [1048, 567, 27, 36], [1062, 600, 13, 19], [1125, 568, 37, 16], [1087, 603, 15, 46],
 [1170, 492, 32, 56], [1185, 530, 17, 92], [1188, 611, 60, 45], [1205, 500, 80, 12], [1251, 491, 64, 20], [1301, 512, 8, 110],
 [1301, 555, 35, 7], [1204, 612, 90, 6], [1281, 620, 25, 34], [1475, 383, 12, 10], [1472, 551, 11, 8]
].forEach(r => pack(r[0], r[1], r[2], r[3]));
pack(806, 354, 32, 30, 0.15);
pack(810, 384, 62, 28, 0.3);
pack(1474, 395, 14, 26, 0.3);
pack(1102, 606, 56, 50, 0.06);
pack(641, 488, 72, 138, 0.8, 0.3);
pack(713, 499, 78, 127, 0.8, 0.3);
pack(790, 562, 31, 64, 0.8, 0.2);
pack(507, 556, 132, 70, 0.8, 0.15);
pack(1421, 563, 46, 68, 0.12);

/* fiducials, probes */
[[487, 385], [487, 398], [487, 401], [487, 408], [487, 412], [499, 587], [499, 596], [474, 598], [659, 439], [585, 657],
 [623, 650], [668, 647], [911, 424], [766, 657], [786, 632], [791, 634], [605, 530], [616, 527], [621, 530], [608, 487], [608, 492], [608, 505],
 [1078, 416], [1082, 416], [1086, 416], [1090, 416], [1050, 641], [1417, 635], [1417, 640], [1417, 645], [1417, 649],
 [1421, 638], [1425, 638], [1190, 492], [1197, 493], [1272, 479]].forEach(p => plus(Y, ...p));

[[628, 438], [622, 447], [627, 457], [492, 624], [498, 636], [510, 636], [511, 647], [511, 657], [928, 534], [929, 545], [929, 556], [901, 626], [912, 625]].forEach(p => dot(p[0], p[1], Y, 3.2));
[[608, 454], [499, 645], [499, 657]].forEach(p => dot(p[0], p[1], G, 3.2));
dot(498, 361, G, 2);
dot(930, 575, G, 2);
dot(543.5, 347, G, 3.6);
[[545, 348], [645, 401], [716, 444], [654, 452], [677, 465], [683, 503], [740, 518], [772, 527], [850, 491], [882, 554], [598, 594],
 [524, 582], [714, 600], [788, 593], [1136, 392], [1148, 393], [1110, 399], [1203, 450], [1306, 394], [1302, 453], [1238, 498],
 [1333, 514], [1177, 521], [1175, 525], [1179, 525], [1054, 610], [1112, 595], [1174, 587], [1094, 634], [1163, 639], [1176, 641], [1198, 647],
 [1221, 637], [1288, 642], [1430, 613], [1452, 617], [1452, 624], [1437, 650]].forEach(p => dot(p[0] + 0.5, p[1] + 0.5));
[[476, 357], [464, 478], [669, 352], [602, 427], [863, 356], [960, 402], [942, 581], [918, 647], [481, 644], [692, 647]].forEach(p => hole(p[0] + 0.5, p[1] + 0.5));
extra += `<circle cx="576" cy="332" r="4" fill="#fff" stroke="${T}"/>`;
extra += `<rect x="944" y="428" width="13" height="5" rx="2" fill="${T}"/><rect x="944" y="535" width="12" height="5" rx="2" fill="${T}"/>`;
extra += `<path d="M1013 602l4-4 4 4-4 4zM1450 361l4-4 4 4-4 4z" fill="${G}"/>`;
extra += '<g transform="translate(932 627) rotate(42)"><rect x="-9" y="-4" width="18" height="8" class="silk"/><path d="M-9-4h7v8h-7zM2-4h7v8h-7z" fill="#808080"/></g>';
extra += '<g transform="translate(932 603) rotate(42)"><rect x="-6" y="-5" width="12" height="9" class="silk"/><path d="M-5-4h3v3h-3zM3 0h2v3h-2z" fill="#808080"/></g>';

const marks = [[704, 268], [1154, 268], [704, 667], [1154, 667]]
    .map(m => `<text class="mark" transform="translate(${m[0] + 4} ${m[1] + 4}) rotate(-45)">XZZ@XZZHK</text>`).join('');

board.innerHTML = `
    <g>${marks}</g>
    <path class="board-fill" d="${outline}"/>
    <g opacity="0.120">${marks}</g>
    <g class="crisp">
        ${traces.map(t => `<path class="trace" d="M${t}"/>`).join('')}
        <path class="trace" d="${bigTrace}"/>
        <path d="${fills[T]}" fill="${T}"/>
        <path d="${fills[G]}" fill="${G}"/>
        <path d="${fills[Y]}" fill="${Y}"/>
        <path class="silk" d="${silk}"/>
    </g>
    <g>${extra}</g>`;
```
